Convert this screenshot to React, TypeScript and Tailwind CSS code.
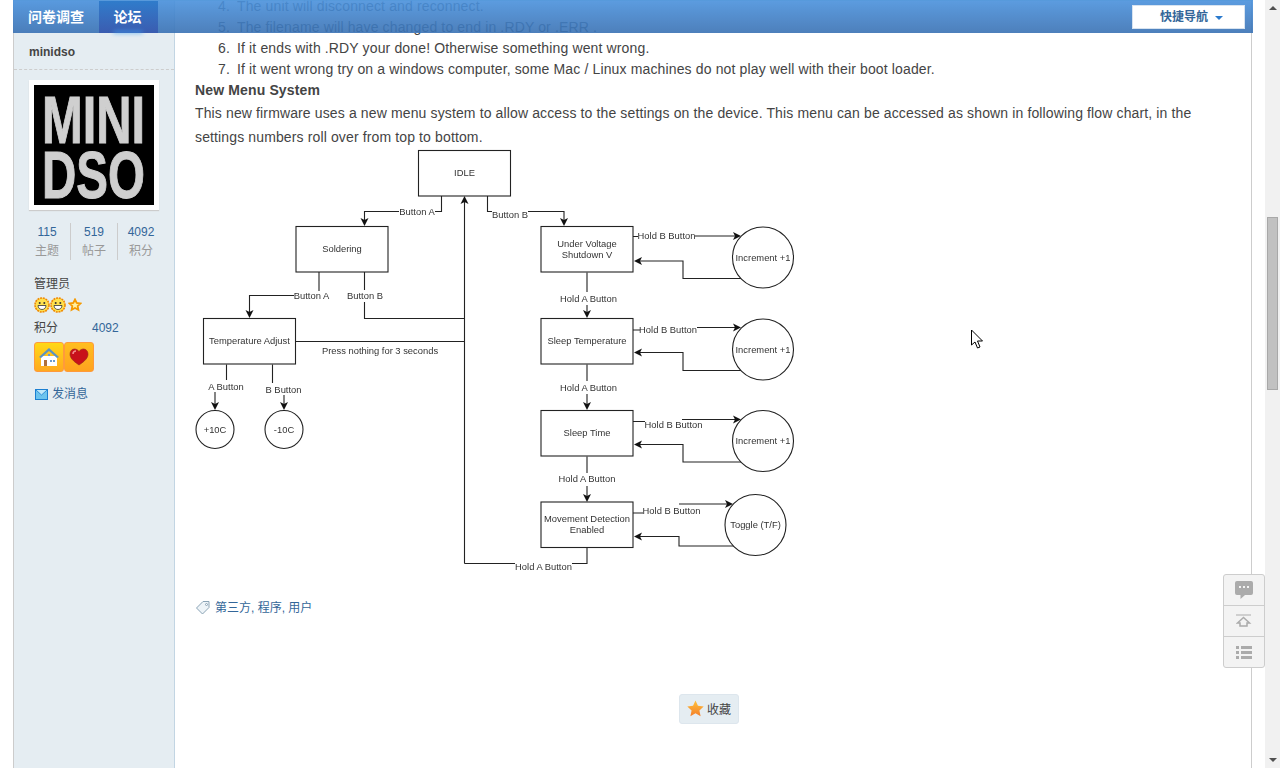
const cjk = "font-['Liberation_Sans','Noto_Sans_CJK_SC',sans-serif]";

const boxes = [
  { x: 418.5, y: 150.5, w: 92, lines: ["IDLE"] },
  { x: 296, y: 226.5, w: 92, lines: ["Soldering"] },
  { x: 203.5, y: 318.5, w: 92, lines: ["Temperature Adjust"] },
  { x: 541, y: 226.5, w: 92, lines: ["Under Voltage", "Shutdown V"] },
  { x: 541, y: 318.5, w: 92, lines: ["Sleep Temperature"] },
  { x: 541, y: 410.5, w: 92, lines: ["Sleep Time"] },
  { x: 541, y: 502, w: 92, lines: ["Movement Detection", "Enabled"] },
];

const circles = [
  { x: 215, y: 429.5, r: 19, t: "+10C" },
  { x: 284, y: 429.5, r: 19, t: "-10C" },
  { x: 763, y: 257.5, r: 30.5, t: "Increment +1" },
  { x: 763, y: 349.5, r: 30.5, t: "Increment +1" },
  { x: 763, y: 441, r: 30.5, t: "Increment +1" },
  { x: 755.5, y: 525, r: 30.5, t: "Toggle (T/F)" },
];

const wires = [
  "M441.5 196V211.5H435M399 211.5H364.5V220",
  "M487.5 196V211.5H492M528 211.5H564V220",
  "M319 272V291M294 295.5H249.5V312",
  "M364.5 272V290M364.5 302V318.5H464.5",
  "M295.5 341.5H464.5",
  "M464.5 563.5V202",
  "M587 548V563.5H572M515 563.5H464.5",
  "M226.5 364.5V380M215 392V404",
  "M272.5 364.5V383M284 395V404",
  "M587 272.5V292M587 305V312",
  "M587 364.5V381M587 394V404",
  "M587 456.5V473M587 486V496",
  "M633 236.5H638M695 236H736",
  "M742 278.5H683V261H640",
  "M633 330H640M697 327.5H736",
  "M742 370.5H683V352.5H640",
  "M633 421.5H645M682 419.5H736",
  "M742 462H683V444.5H640",
  "M633 513H643M679 504H728",
  "M735 546H679V536.5H640",
];

// arrow tips: x, y, direction
const arrows: [number, number, string][] = [
  [364.5, 226, "d"], [564, 226, "d"], [249.5, 318, "d"], [464.5, 196, "u"],
  [215, 410, "d"], [284, 410, "d"], [587, 318, "d"], [587, 410, "d"], [587, 502, "d"],
  [741, 236, "r"], [741, 327.5, "r"], [741, 419.5, "r"], [733, 504, "r"],
  [634, 261, "l"], [634, 352.5, "l"], [634, 444.5, "l"], [634, 536.5, "l"],
];

const labels: [number, number, string][] = [
  [417, 211.5, "Button A"], [510, 214.5, "Button B"], [311.5, 296, "Button A"], [365, 296, "Button B"],
  [380, 350.5, "Press nothing for 3 seconds"], [226, 386.5, "A Button"], [283.5, 389.5, "B Button"],
  [588.5, 298.5, "Hold A Button"], [588.5, 387.5, "Hold A Button"], [587, 479, "Hold A Button"],
  [666.5, 236, "Hold B Button"], [668, 330, "Hold B Button"], [673.5, 425, "Hold B Button"], [671.5, 510.5, "Hold B Button"],
  [543.5, 567, "Hold A Button"],
];

const arrowPath = (x: number, y: number, d: string) => {
  if (d === "d") return `M${x} ${y}L${x - 4} ${y - 8}L${x} ${y - 6}L${x + 4} ${y - 8}Z`;
  if (d === "u") return `M${x} ${y}L${x - 4} ${y + 8}L${x} ${y + 6}L${x + 4} ${y + 8}Z`;
  if (d === "r") return `M${x} ${y}L${x - 8} ${y - 4}L${x - 6} ${y}L${x - 8} ${y + 4}Z`;
  return `M${x} ${y}L${x + 8} ${y - 4}L${x + 6} ${y}L${x + 8} ${y + 4}Z`;
};

function FlowChart() {
  return (
    <svg
      width="605"
      height="431"
      viewBox="195 149 605 431"
      className="block blur-[0.4px]"
      fontFamily="Liberation Sans, sans-serif"
      fontSize="9.4"
    >
      {wires.map((d) => (
        <path key={d} d={d} fill="none" stroke="#222" strokeWidth="1.1" />
      ))}
      {arrows.map(([x, y, d]) => (
        <path key={`${x}-${y}`} d={arrowPath(x, y, d)} fill="#111" />
      ))}
      {boxes.map((b) => (
        <g key={b.lines[0]}>
          <rect x={b.x} y={b.y} width={b.w} height="45.5" fill="#fff" stroke="#222" strokeWidth="1.1" />
          {b.lines.map((l, i) => (
            <text
              key={l}
              x={b.x + b.w / 2}
              y={b.y + 25.5 + (b.lines.length === 2 ? (i === 0 ? -5.5 : 5.5) : 0)}
              textAnchor="middle"
              fill="#333"
            >
              {l}
            </text>
          ))}
        </g>
      ))}
      {circles.map((c) => (
        <g key={`${c.x}-${c.y}`}>
          <circle cx={c.x} cy={c.y} r={c.r} fill="#fff" stroke="#222" strokeWidth="1.1" />
          <text x={c.x} y={c.y + 3} textAnchor="middle" fill="#333">
            {c.t}
          </text>
        </g>
      ))}
      {labels.map(([x, y, t]) => (
        <text key={`${x}-${y}`} x={x} y={y + 3} textAnchor="middle" fill="#333">
          {t}
        </text>
      ))}
    </svg>
  );
}

function Logo() {
  return (
    <svg width="120" height="120" viewBox="0 0 120 120" className="block bg-black blur-[0.4px]">
      <text
        x="8"
        y="58"
        fill="#cfcfcf"
        stroke="#cfcfcf"
        fontFamily="Liberation Sans, sans-serif"
        fontSize="66"
        fontWeight="700"
        textLength="103"
        lengthAdjust="spacingAndGlyphs"
      >
        MINI
      </text>
      <text
        x="8"
        y="113"
        fill="#cfcfcf"
        stroke="#cfcfcf"
        fontFamily="Liberation Sans, sans-serif"
        fontSize="66"
        fontWeight="700"
        textLength="103"
        lengthAdjust="spacingAndGlyphs"
      >
        DSO
      </text>
    </svg>
  );
}

function Smiley() {
  return (
    <svg width="16" height="16" viewBox="0 0 16 16" className="block">
      <circle cx="8" cy="8" r="7" fill="#ffe14d" stroke="#f08a00" strokeWidth="1.6" strokeDasharray="2 0.8" />
      <circle cx="5.7" cy="6" r="1" fill="#333" />
      <circle cx="10.3" cy="6" r="1" fill="#333" />
      <path d="M4 8.5h8c0 2.4-1.8 4-4 4s-4-1.6-4-4z" fill="#fff" stroke="#333" strokeWidth="0.8" />
    </svg>
  );
}

function RankStar() {
  return (
    <svg width="14" height="14" viewBox="0 0 14 14" className="ml-[2px] block">
      <path
        d="M7 1.500l1.700 3.500 3.800.5-2.800 2.600.7 3.800L7 10l-3.400 1.900.7-3.800-2.800-2.600 3.800-.5z"
        fill="#fff0a0"
        stroke="#f59a00"
        strokeWidth="1.8"
      />
    </svg>
  );
}

function Sidebar() {
  return (
    <aside className={`w-[162px] shrink-0 bg-[#E5EDF2] border-x border-x-[#C2D5E3] border-l-[#ccc] text-xs text-[#444] ${cjk}`}>
      <div className="mt-[33px] h-[37px] border-b border-dashed border-[#CDCDCD] pl-[15px] pt-[12px] font-bold leading-[14px] text-[#444]">
        minidso
      </div>
      <div className="ml-[15px] mt-[10px] w-[130px] bg-white p-[5px] shadow-[0_1px_1px_#ccc]">
        <Logo />
      </div>
      <div className="ml-[10px] mt-[13px] flex w-[140px] text-center leading-[18px]">
        <div className="w-[47px] border-r border-[#ccc]">
          <div className="text-[#369]">115</div>
          <div className="mt-[1px] text-[#999]">主题</div>
        </div>
        <div className="w-[47px] border-r border-[#ccc]">
          <div className="text-[#369]">519</div>
          <div className="mt-[1px] text-[#999]">帖子</div>
        </div>
        <div className="w-[46px]">
          <div className="text-[#369]">4092</div>
          <div className="mt-[1px] text-[#999]">积分</div>
        </div>
      </div>
      <div className="ml-[20px] mt-[15px] leading-[18px]">管理员</div>
      <div className="ml-[20px] mt-[4px] flex items-center">
        <Smiley />
        <Smiley />
        <RankStar />
      </div>
      <div className="ml-[20px] mt-[6px] flex leading-[18px]">
        <span className="w-[58px]">积分</span>
        <span className="text-[#369]">4092</span>
      </div>
      <div className="ml-[20px] mt-[5px] flex">
        <div className="flex h-[30px] w-[30px] items-center justify-center rounded-[3px] border border-[#FF9A3C] bg-gradient-to-b from-[#FFD814] to-[#FFA91F]">
          <svg width="22" height="22" viewBox="0 0 22 22">
            <path d="M3 20V10h16v10z" fill="#fff" />
            <path d="M1 11L11 2l10 9-2 1-8-7-8 7z" fill="#5c93c0" />
            <rect x="6" y="14" width="3" height="6" fill="#b0713a" />
            <rect x="12" y="14" width="2" height="2" fill="#6a9bd0" />
            <rect x="15" y="14" width="2" height="2" fill="#6a9bd0" />
            <rect x="10" y="8" width="2" height="2" fill="#6a9bd0" />
          </svg>
        </div>
        <div className="flex h-[30px] w-[30px] items-center justify-center rounded-[3px] border border-[#FF9A3C] bg-gradient-to-b from-[#FFBE1E] to-[#FFA21F]">
          <svg width="20" height="18" viewBox="0 0 20 18">
            <path d="M10 17C4 13 1 10 1 6c0-3 2-5 4.500-5C7.500 1 9 2 10 3.500 11 2 12.500 1 14.500 1 17 1 19 3 19 6c0 4-3 7-9 11z" fill="#c8101a" stroke="#8f2a1a" strokeWidth="0.6" />
            <path d="M4 6c0-2 1.500-3 3-3" fill="none" stroke="#f28a8a" strokeWidth="1.500" />
          </svg>
        </div>
      </div>
      <div className="ml-[21px] mt-[13px] flex items-center leading-[18px] text-[#369]">
        <svg width="13" height="11" viewBox="0 0 13 11" className="mr-[4px] block">
          <rect x="0.5" y="0.500" width="12" height="10" fill="#6cc4ee" stroke="#1b7fd1" />
          <path d="M1 1l5.500 5L12 1" fill="#bfe8fa" stroke="#1b7fd1" strokeWidth="0.8" />
        </svg>
        发消息
      </div>
    </aside>
  );
}

function Content() {
  const items = [
    [4, "The unit will disconnect and reconnect."],
    [5, "The filename will have changed to end in .RDY or .ERR ."],
    [6, "If it ends with .RDY your done! Otherwise something went wrong."],
    [7, "If it went wrong try on a windows computer, some Mac / Linux machines do not play well with their boot loader."],
  ];
  return (
    <main className="flex-1 overflow-hidden bg-white pl-[20px] font-['Liberation_Sans',sans-serif] text-sm text-[#444]">
      <ol className="-mt-[4px] leading-[21px] tracking-[0.14px]">
        {items.map(([n, t]) => (
          <li key={n} className="flex whitespace-nowrap pl-[23px]">
            <span className="w-[19px]">{n}.</span>
            <span>{t}</span>
          </li>
        ))}
      </ol>
      <div className="font-bold leading-[21px] tracking-[0.14px]">New Menu System</div>
      <p className="-mt-[0.5px] w-[1020px] leading-[24px] tracking-[0.13px]">
        This new firmware uses a new menu system to allow access to the settings on the device. This menu can be accessed as shown in following flow chart, in the settings numbers roll over from top to bottom.
      </p>
      <FlowChart />
      <div className={`mt-[19px] flex items-center text-xs leading-[18px] text-[#369] ${cjk}`}>
        <svg width="16" height="16" viewBox="0 0 16 16" className="mr-[4px] block">
          <path d="M1.500 9L8 2.500h6v6L7.500 15z" fill="#eef4f8" stroke="#8aa3b5" transform="translate(0 -1)" />
          <circle cx="11.500" cy="4.500" r="1" fill="#fff" stroke="#8aa3b5" />
        </svg>
        第三方, 程序, 用户
      </div>
      <div className="mt-[77px] flex justify-center pr-[28px]">
        <div className={`flex h-[30px] w-[60px] items-center rounded-[3px] border border-[#DDE6ED] bg-[#E5EDF2] pl-[7px] text-xs text-[#444] ${cjk}`}>
          <svg width="17" height="17" viewBox="0 0 16 16" className="mr-[3px] block">
            <defs>
              <linearGradient id="fav" x1="0" y1="0" x2="0" y2="1">
                <stop offset="0" stopColor="#ffc23a" />
                <stop offset="1" stopColor="#f47f2c" />
              </linearGradient>
            </defs>
            <path d="M8 0.500l2.300 5 5.400.6-4 3.700 1.100 5.400L8 12.500l-4.800 2.700 1.100-5.400-4-3.700 5.400-.6z" fill="url(#fav)" />
          </svg>
          <span className="pt-[2px]">收藏</span>
        </div>
      </div>
    </main>
  );
}

function SideButtons() {
  return (
    <div className="absolute left-[1223px] top-[574px] w-[42px] rounded-[3px] border border-[#CDCDCD] bg-[#F3F3F3]">
      <div className="flex h-[31px] items-center justify-center border-b border-[#CDCDCD]">
        <svg width="18" height="18" viewBox="0 0 18 18">
          <path d="M2 0h14a2 2 0 0 1 2 2v10a2 2 0 0 1-2 2H10l-4.500 4v-4H2a2 2 0 0 1-2-2V2a2 2 0 0 1 2-2z" fill="#ABABAB" />
          <rect x="4" y="5" width="2" height="2" fill="#f3f3f3" />
          <rect x="8" y="5" width="2" height="2" fill="#f3f3f3" />
          <rect x="12" y="5" width="2" height="2" fill="#f3f3f3" />
        </svg>
      </div>
      <div className="flex h-[31px] items-center justify-center border-b border-[#CDCDCD]">
        <svg width="16" height="14" viewBox="0 0 16 14" fill="none" stroke="#ABABAB">
          <path d="M0 1h15" />
          <path d="M1.500 9l6-5.500 6 5.500H11v3H4V9z" strokeWidth="1.500" />
        </svg>
      </div>
      <div className="flex h-[30px] items-center justify-center">
        <svg width="16" height="13" viewBox="0 0 16 13" fill="#ABABAB">
          <rect x="0" y="0" width="3" height="3" />
          <rect x="5" y="0" width="11" height="3" />
          <rect x="0" y="5" width="3" height="3" />
          <rect x="5" y="5" width="11" height="3" />
          <rect x="0" y="10" width="3" height="3" />
          <rect x="5" y="10" width="11" height="3" />
        </svg>
      </div>
    </div>
  );
}

function TopBar() {
  return (
    <nav className={`absolute left-[13px] top-0 flex h-[33px] w-[1240px] items-stretch border-t border-[#5AA0E4]/80 bg-gradient-to-b from-[#4A91DC]/90 to-[#3A72B4]/90 ${cjk}`}>
      <div className="w-[86px] pl-[15px] text-sm font-bold leading-[32px] text-white">问卷调查</div>
      <div className="relative w-[59px] bg-gradient-to-b from-[#2F7CCB] to-[#3A5CB0] pr-[2px] text-center text-sm font-bold leading-[32px] text-white">
        论坛
        <div className="absolute bottom-0 left-[14px] h-[2px] w-[30px] rounded-t-full bg-[#3FA0F0] blur-[2px]" />
      </div>
      <div className="ml-auto mr-[8px] mt-[4px] flex h-[24px] w-[113px] items-center border border-[#D7E3F0] bg-white pl-[27px] text-xs font-bold text-[#369]">
        快捷导航
        <span className="ml-[7px] mt-[2px] h-0 w-0 border-x-[4px] border-t-[4px] border-x-transparent border-t-[#2B7ACD]" />
      </div>
    </nav>
  );
}

function Scrollbar() {
  return (
    <div className="relative w-[15px] shrink-0 bg-[#F1F1F1]">
      <span className="absolute left-[4px] top-[6px] h-0 w-0 border-x-[4px] border-b-[4px] border-x-transparent border-b-[#505050]" />
      <div className="absolute inset-x-[2px] top-[217px] h-[173px] border border-[#A8A8A8] bg-[#C1C1C1]" />
      <span className="absolute bottom-[6px] left-[4px] h-0 w-0 border-x-[4px] border-t-[4px] border-x-transparent border-t-[#505050]" />
    </div>
  );
}

export default function App() {
  return (
    <div className="relative flex h-[768px] w-[1280px] overflow-hidden bg-white">
      <div className="w-[13px] shrink-0" />
      <div className="flex w-[1239px] shrink-0 border-r border-[#CDCDCD]">
        <Sidebar />
        <Content />
      </div>
      <div className="w-[13px] shrink-0" />
      <Scrollbar />
      <TopBar />
      <SideButtons />
      <svg width="14" height="21" viewBox="0 0 14 21" className="absolute left-[970px] top-[329px]">
        <path d="M1.500 1v15l3.500-3 2.500 6 2.500-1-2.500-6h5z" fill="#fff" stroke="#000" />
      </svg>
    </div>
  );
}
